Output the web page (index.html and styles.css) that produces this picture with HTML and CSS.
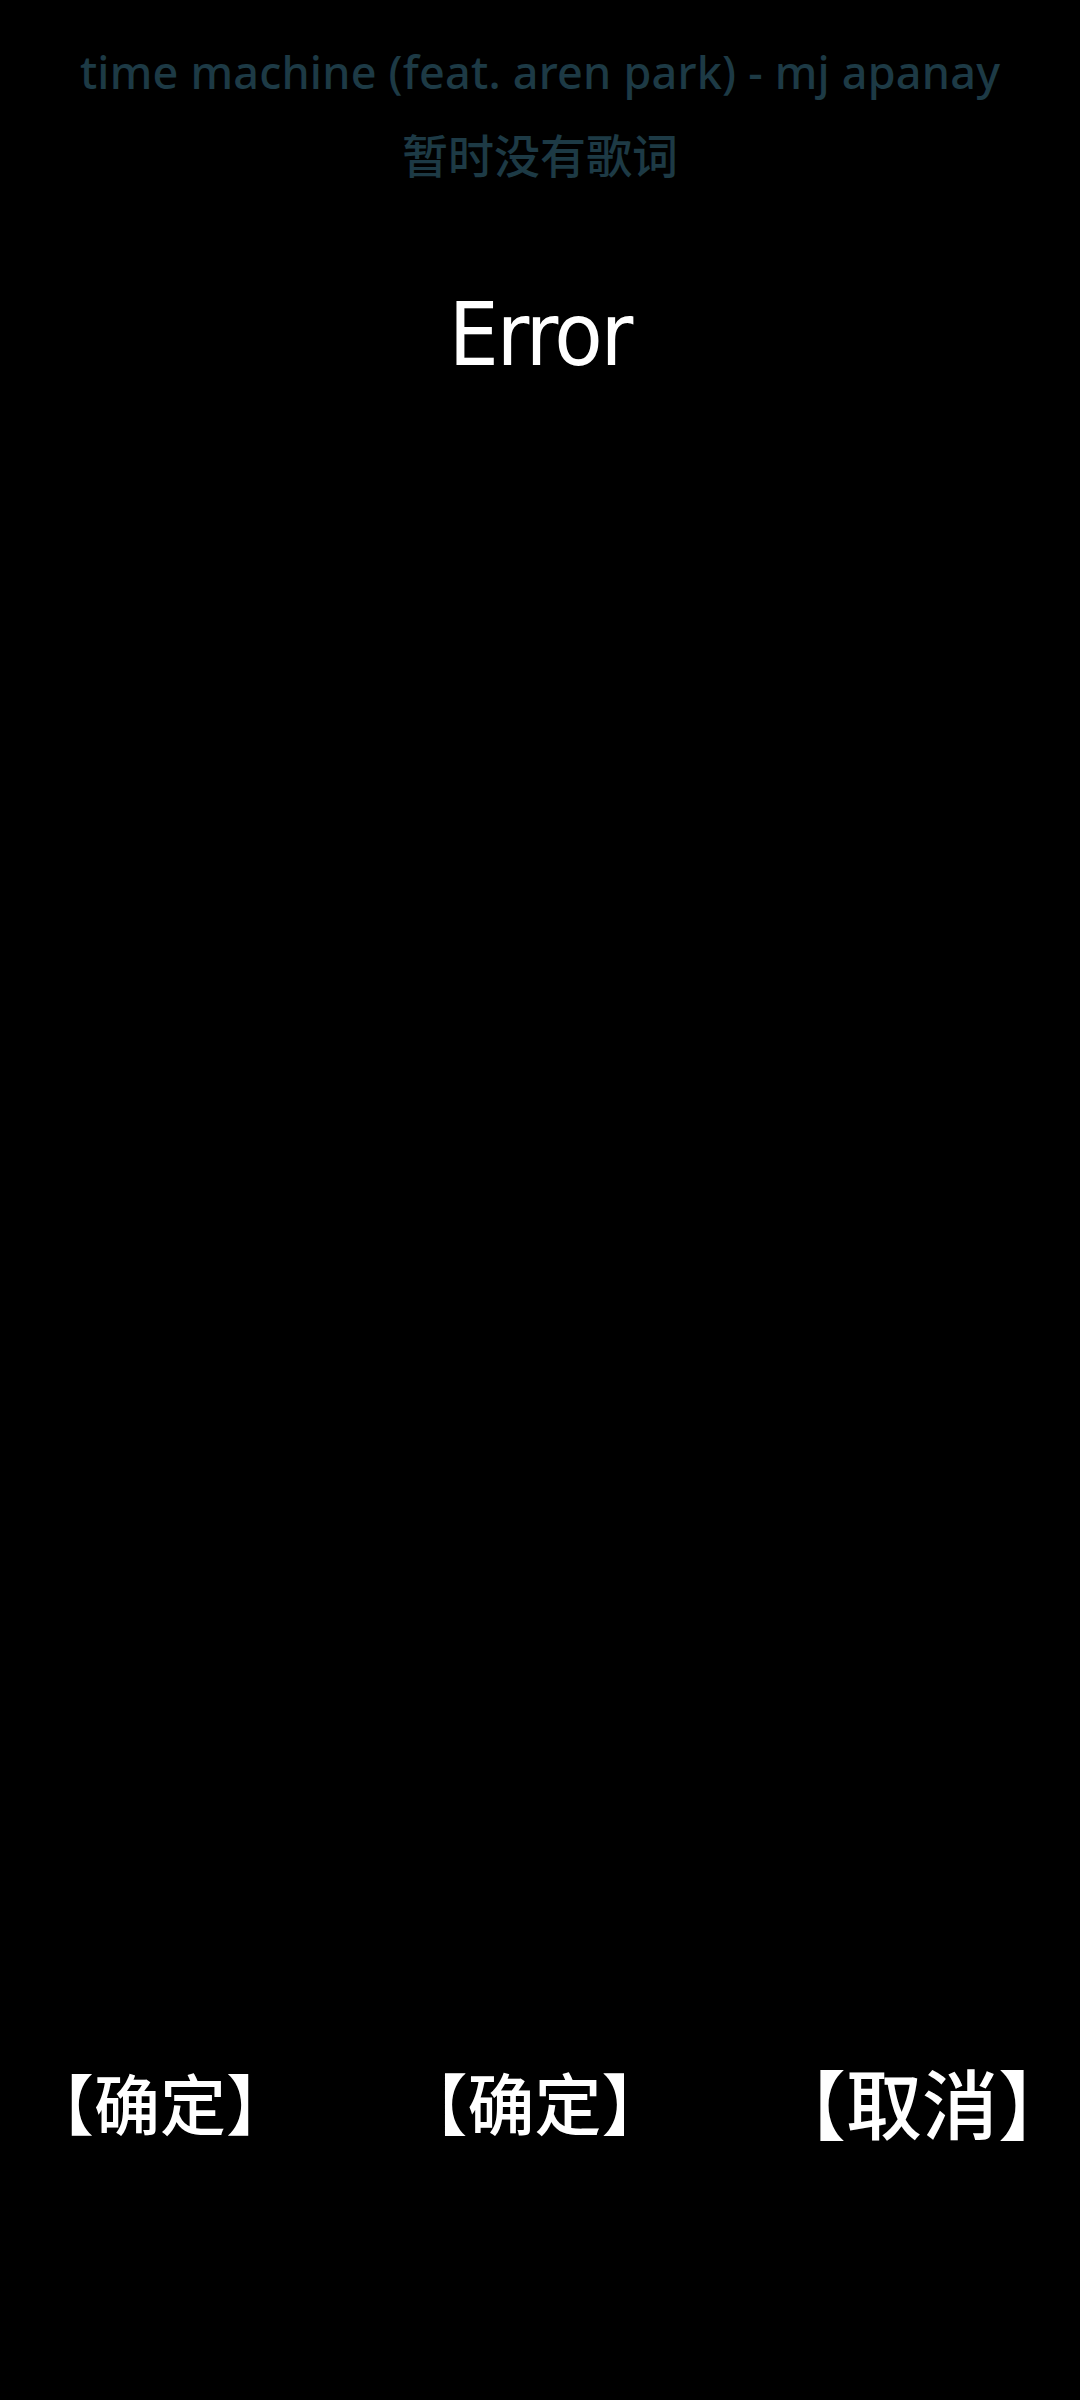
FILE: index.html
```html
<!DOCTYPE html>
<html lang="zh-CN">
<head>
<meta charset="utf-8">
<title>Error</title>
<link rel="stylesheet" href="styles.css">
</head>
<body>
<div class="screen">
  <header class="lyrics">
    <div class="song-title">time machine (feat. aren park) - mj apanay</div>
    <div class="no-lyrics">暂时没有歌词</div>
  </header>
  <div class="error">Error</div>
  <div class="spacer"></div>
  <nav class="actions">
    <span class="btn btn-ok1">【确定】</span>
    <span class="btn btn-ok2">【确定】</span>
    <span class="btn btn-cancel">【取消】</span>
  </nav>
</div>
</body>
</html>
```

FILE: styles.css
```css
html, body {
  margin: 0;
  padding: 0;
  background: #000;
}

.screen {
  width: 1080px;
  height: 2400px;
  display: flex;
  flex-direction: column;
  background: #000;
  overflow: hidden;
}

.lyrics {
  display: flex;
  flex-direction: column;
  align-items: center;
  padding-top: 40px;
  color: #1d3a45;
  font-family: "Noto Sans", "Noto Sans CJK SC", sans-serif;
  font-size: 45px;
  font-weight: 500;
}

.song-title {
  line-height: 64px;
  white-space: nowrap;
  letter-spacing: 0.2px;
}

.no-lyrics {
  font-family: "Noto Sans CJK SC", sans-serif;
  font-size: 46px;
  font-weight: 500;
  line-height: 64px;
  margin-top: 17px;
}

.error {
  margin-top: 100px;
  text-align: center;
  color: #fff;
  font-family: "DejaVu Sans Condensed", "DejaVu Sans", sans-serif;
  font-stretch: condensed;
  font-size: 88px;
  letter-spacing: -2px;
  line-height: 100px;
}

.spacer {
  flex: 1;
}

.actions {
  display: flex;
  justify-content: space-between;
  align-items: flex-end;
  padding: 0 44px 259px 61px;
  color: #fff;
  font-family: "Noto Sans CJK SC", sans-serif;
  font-weight: 500;
}

.btn {
  font-size: 66px;
  line-height: 80px;
  font-feature-settings: "halt";
}

.btn-ok2 {
  font-size: 67px;
  margin-left: 2px;
}

.btn-cancel {
  font-size: 76px;
}
```
